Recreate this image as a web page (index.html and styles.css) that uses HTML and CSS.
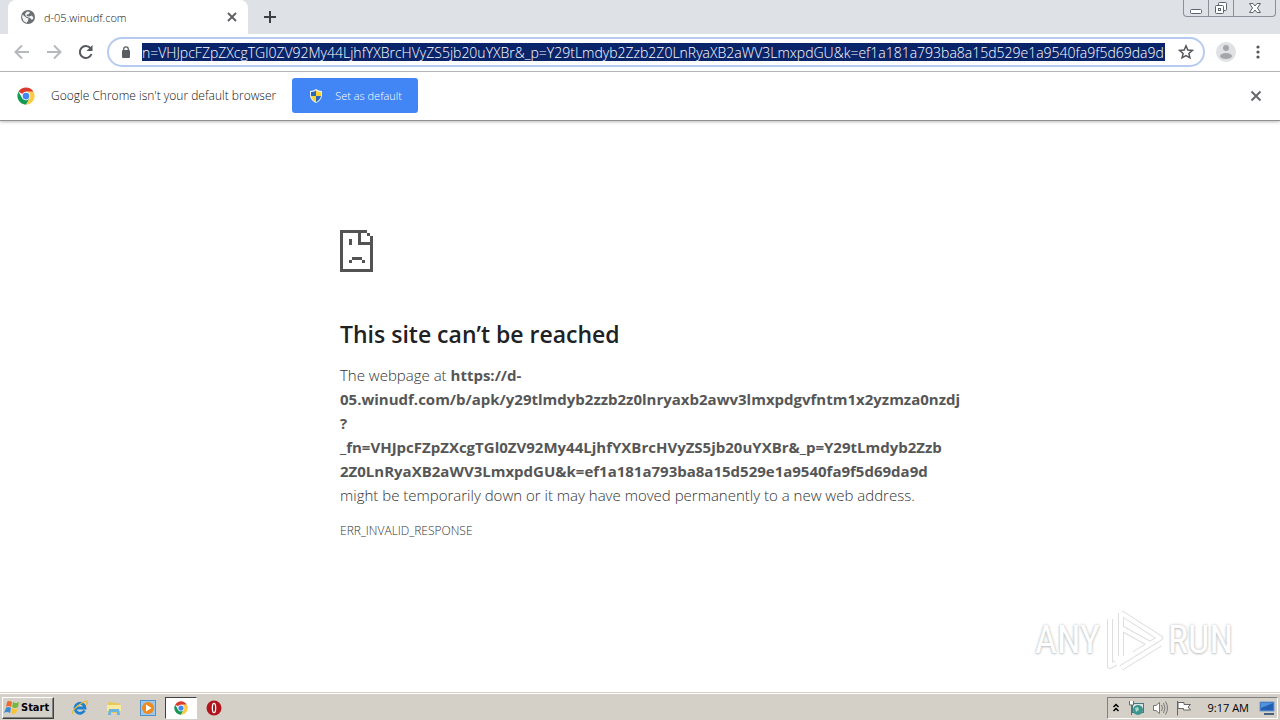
FILE: index.html
```html
<!DOCTYPE html>
<html lang="en">
<head>
  <meta charset="UTF-8" />
  <meta name="viewport" content="width=device-width, initial-scale=1.0" />
  <title>d-05.winudf.com</title>
  <link rel="stylesheet" href="styles.css">
</head>
<body>

<!-- Chrome logo, used in the infobar and the taskbar -->
<svg class="defs" width="0" height="0" aria-hidden="true">
  <symbol id="chrome" viewBox="0 0 48 48">
    <circle cx="24" cy="24" r="23" fill="#fff"/>
    <path d="M24 24 4.100 12.500A23 23 0 0 1 43.900 12.500H24Z" fill="#db3a2f"/>
    <path d="M4.100 12.500A23 23 0 0 0 24 47L34 29.750 24 35.500 14 29.750Z" fill="#159a55"/>
    <path d="M43.900 12.500A23 23 0 0 1 24 47L34 29.750 34 18 24 12.500Z" fill="#fbcb43"/>
    <circle cx="24" cy="24" r="11.500" fill="#fff"/>
    <circle cx="24" cy="24" r="9" fill="#4688f1"/>
  </symbol>
</svg>

<header class="tabstrip">
  <div class="tab">
    <svg class="globe" viewBox="0 0 16 16" width="16" height="16">
      <circle cx="8" cy="8" r="7" fill="#6b6e73"/>
      <path d="M2.500 5.500 6 8.500 8.500 9.500 8 12 6.500 14 3.500 12 2 8ZM7 2.500 10 3 9 5 7 5.500 6.500 7 9 7.500 12 6.500 13.500 9 12 11 10 9 6 7.500 5 5Z" fill="#f2f3f4"/>
    </svg>
    <span class="tab-title">d-05.winudf.com</span>
    <button class="icon-btn" aria-label="Close tab">
      <svg viewBox="0 0 10 10" width="10" height="10"><path d="M1 1 9 9M9 1 1 9" stroke="#5a5d61" stroke-width="1.800"/></svg>
    </button>
  </div>
  <button class="icon-btn new-tab" aria-label="New tab">
    <svg viewBox="0 0 12 12" width="12" height="12"><path d="M6 0V12M0 6H12" stroke="#3c4043" stroke-width="2"/></svg>
  </button>
  <div class="window-buttons">
    <button aria-label="Minimize">
      <svg viewBox="0 0 14 14" width="14" height="14"><rect x="1.500" y="8.500" width="11" height="4" rx="1" fill="#fff" stroke="#5c6270"/></svg>
    </button>
    <button aria-label="Restore">
      <svg viewBox="0 0 14 14" width="14" height="14" fill="#fff" stroke="#5c6270"><rect x="4.500" y="1.500" width="8" height="8" rx="1"/><rect x="1.500" y="4.500" width="8" height="8" rx="1"/><rect x="4.500" y="7.500" width="2" height="2"/></svg>
    </button>
    <button class="close-window" aria-label="Close">
      <svg viewBox="0 0 14 14" width="14" height="14"><path d="M1.500 2.500H5L7 5 9 2.500H12.500L9.500 7 12.500 11.500H9L7 9 5 11.500H1.500L4.500 7Z" fill="#fff" stroke="#5c6270"/></svg>
    </button>
  </div>
</header>

<nav class="toolbar">
  <button class="icon-btn" aria-label="Back">
    <svg viewBox="0 0 16 16" width="16" height="16" fill="none" stroke="#b6b8bb" stroke-width="2"><path d="M15 8H2M8 1.500 1.500 8 8 14.500"/></svg>
  </button>
  <button class="icon-btn" aria-label="Forward">
    <svg viewBox="0 0 16 16" width="16" height="16" fill="none" stroke="#b6b8bb" stroke-width="2"><path d="M1 8H14M8 1.500 14.500 8 8 14.500"/></svg>
  </button>
  <button class="icon-btn" aria-label="Reload">
    <svg viewBox="0 0 16 16" width="16" height="16"><path d="M13.500 10A6 6 0 1 1 12.500 4.200" fill="none" stroke="#55585c" stroke-width="2"/><path d="M14.500 1V7H8.500Z" fill="#55585c"/></svg>
  </button>
  <div class="omnibox">
    <svg class="lock" viewBox="0 0 10 12" width="10" height="12"><rect x="1" y="4" width="8" height="8" rx="1" fill="#5a5d61"/><path d="M2.700 5V3.200a2.300 2.300 0 0 1 4.600 0V5" fill="none" stroke="#5a5d61" stroke-width="1.300"/></svg>
    <input class="url" type="text" aria-label="Address" value="n=VHJpcFZpZXcgTGl0ZV92My44LjhfYXBrcHVyZS5jb20uYXBr&amp;_p=Y29tLmdyb2Zzb2Z0LnRyaXB2aWV3LmxpdGU&amp;k=ef1a181a793ba8a15d529e1a9540fa9f5d69da9d" />
    <button class="icon-btn" aria-label="Bookmark this page">
      <svg viewBox="0 0 16 16" width="16" height="16"><path d="M8 1.800 9.800 6 14.300 6.400 10.900 9.400 11.900 13.800 8 11.500 4.100 13.800 5.100 9.400 1.700 6.400 6.200 6Z" fill="none" stroke="#55585c" stroke-width="1.500"/></svg>
    </button>
  </div>
  <button class="icon-btn profile" aria-label="Profile">
    <svg viewBox="0 0 20 20" width="20" height="20"><circle cx="10" cy="10" r="10" fill="#e0e1e3"/><circle cx="10" cy="6" r="3" fill="#a4a6a9"/><ellipse cx="10" cy="14" rx="6" ry="3" fill="#a4a6a9"/></svg>
  </button>
  <button class="icon-btn" aria-label="Menu">
    <svg viewBox="0 0 16 16" width="16" height="16" fill="#55585c"><circle cx="8" cy="3" r="1.600"/><circle cx="8" cy="8" r="1.600"/><circle cx="8" cy="13" r="1.600"/></svg>
  </button>
</nav>

<div class="infobar">
  <svg width="18" height="18"><use href="#chrome"/></svg>
  <span class="info-text">Google Chrome isn't your default browser</span>
  <button class="set-default">
    <svg viewBox="0 0 16 16" width="16" height="16"><path d="M8 1Q11 3 14 3V8Q13 13 8 15Q3 13 2 8V3Q5 3 8 1Z" fill="#e8edf4"/><path d="M8 2.500V8H3V4Q6 4 8 2.500ZM8 8H13Q12 12 8 14Z" fill="#2b69b8"/><path d="M8 2.500Q10 4 13 4V8H8ZM3 8H8V14Q4 12 3 8Z" fill="#fbd334"/></svg>
    Set as default
  </button>
  <button class="icon-btn dismiss" aria-label="Dismiss">
    <svg viewBox="0 0 12 12" width="12" height="12"><path d="M1.500 1.500 10.500 10.500M10.500 1.500 1.500 10.500" stroke="#66696d" stroke-width="2"/></svg>
  </button>
</div>

<main class="page">
  <div class="error">
    <svg class="sad-page" viewBox="0 0 33 42" width="33" height="42" shape-rendering="crispEdges" fill="#535353">
      <path d="M0 0H27V3H3V39H30V15H18V3H21V12H30V6H33V42H0Z"/>
      <path d="M27 3H30V6H27ZM9 9H12V15H9ZM9 30H12V33H9ZM12 27H22V30H12ZM22 30H25V33H22Z"/>
    </svg>
    <h1>This site can’t be reached</h1>
    <p>The webpage at <strong>https://d-<br>05.winudf.com/b/apk/y29tlmdyb2zzb2z0lnryaxb2awv3lmxpdgvfntm1x2yzmza0nzdj<br>?<br>_fn=VHJpcFZpZXcgTGl0ZV92My44LjhfYXBrcHVyZS5jb20uYXBr&amp;_p=Y29tLmdyb2Zzb<br>2Z0LnRyaXB2aWV3LmxpdGU&amp;k=ef1a181a793ba8a15d529e1a9540fa9f5d69da9d</strong><br>might be temporarily down or it may have moved permanently to a new web address.</p>
    <div class="error-code">ERR_INVALID_RESPONSE</div>
  </div>

  <div class="watermark">
    <span>ANY</span>
    <svg viewBox="0 0 60 64" width="60" height="64" fill="none" stroke-linejoin="round">
      <g stroke="#dedede" stroke-width="6"><path d="M17 5V48M17 5 56 30 30 46M17 20 46 36M6 11V58L12 55M17 60 56 36"/></g>
      <g stroke="#fff" stroke-width="4"><path d="M17 5V48M17 5 56 30 30 46M17 20 46 36M6 11V58L12 55M17 60 56 36"/></g>
    </svg>
    <span>RUN</span>
  </div>
</main>

<footer class="taskbar">
  <button class="start">
    <svg viewBox="0 0 16 16" width="16" height="16"><path d="M3 2Q5 0 8 2L7 7Q4 5 2 7Z" fill="#ee6b30"/><path d="M9 2Q12 4 15 2L14 7Q11 9 8 7Z" fill="#78b83c"/><path d="M2 8Q4 6 7 8L6 13Q3 11 0 13Z" fill="#3d8ad0"/><path d="M8 8Q11 10 14 8L12 13Q10 15 7 13Z" fill="#f8c53a"/></svg>
    Start
  </button>
  <div class="quick-launch">
    <button aria-label="Internet Explorer">
      <svg viewBox="0 0 16 16" width="16" height="16" fill="none"><path d="M12.500 10.500A5 5 0 1 1 13 8H4" stroke="#1e80cf" stroke-width="2.800"/><path d="M1 14Q-1 11 7 5T15 2Q16 3 14 5" stroke="#e9b93a" stroke-width="1.300"/></svg>
    </button>
    <button aria-label="Windows Explorer">
      <svg viewBox="0 0 16 16" width="16" height="16"><path d="M2 2H7L8 3H14V13H2Z" fill="#e8c960"/><path d="M1 5H15V11H1Z" fill="#faeaa0"/><path d="M3 9H13L14 15H11V12H5V15H2Z" fill="#68b5df"/></svg>
    </button>
    <button aria-label="Windows Media Player">
      <svg viewBox="0 0 16 16" width="16" height="16"><rect x="0.500" y="0.500" width="15" height="15" fill="#9ac9ef" stroke="#4f91c8"/><circle cx="8" cy="8" r="6" fill="#f18a1d"/><path d="M6 4.500 11.500 8 6 11.500Z" fill="#fff"/></svg>
    </button>
    <button class="running" aria-label="Google Chrome">
      <svg width="14" height="14"><use href="#chrome"/></svg>
    </button>
    <button aria-label="Opera">
      <svg viewBox="0 0 16 16" width="16" height="16"><circle cx="8" cy="8" r="7.500" fill="#b3141b"/><ellipse cx="8" cy="8" rx="2.300" ry="5.300" fill="#fff"/><ellipse cx="8" cy="8" rx="1" ry="4" fill="#9c1218"/></svg>
    </button>
  </div>
  <div class="tray">
    <svg viewBox="0 0 8 12" width="8" height="12" fill="none" stroke="#000" stroke-width="1.500"><path d="M1.500 5 4 2.500 6.500 5M1.500 9 4 6.500 6.500 9"/></svg>
    <svg viewBox="0 0 16 16" width="16" height="16"><rect x="4.500" y="3.500" width="11" height="9" fill="#d9e4e2" stroke="#497781"/><circle cx="10" cy="10" r="5" fill="#3c9490"/><path d="M7 8 10 7 11 10 8 12Z" fill="#a9d9c5"/><path d="M1.500 1V5H5.500V1M3.500 5V15" fill="#fff" stroke="#6b6b68"/></svg>
    <svg viewBox="0 0 16 16" width="16" height="16" fill="none" stroke="#777775"><path d="M1.500 5.500H4L7.500 2.500V13.500L4 10.500H1.500Z" fill="#fff"/><path d="M9.500 5Q11.500 8 9.500 11M11.500 3Q14.500 8 11.500 13M13.500 1.500Q17.500 8 13.500 14.500"/></svg>
    <svg viewBox="0 0 16 16" width="16" height="16" fill="#fff" stroke="#656563"><path d="M1.500 1V15.500M2 2.500H8V4.500H14.500L12 7 14.500 10H7.500V8.500H2Z"/></svg>
    <time>9:17 AM</time>
    <svg viewBox="0 0 16 16" width="16" height="16"><rect x="1" y="2" width="14" height="9" fill="#2360b4" stroke="#6c98ce"/><path d="M2 3H14L2 8Z" fill="#4e93df"/><path d="M5 13H15V15H5Z" fill="#45617e"/></svg>
  </div>
</footer>

</body>
</html>
```
FILE: styles.css
```css
* {
  box-sizing: border-box;
}
body {
  margin: 0;
  height: 100vh;
  display: flex;
  flex-direction: column;
  overflow: hidden;
  background: #fff;
  font-family: "Open Sans", "Noto Sans", sans-serif;
  font-weight: 300;
  color: #111;
}

svg {
  display: block;
  flex: none;
}

.defs {
  position: absolute;
}

button {
  font: inherit;
  padding: 0;
  border: 0;
  background: none;
}

.icon-btn {
  display: flex;
  align-items: center;
  justify-content: center;
}

/* Tabs */
.tabstrip {
  display: flex;
  align-items: flex-start;
  height: 34px;
  padding-left: 8px;
  background: #dee1e6;
}

.tab {
  display: flex;
  align-items: center;
  gap: 8px;
  width: 240px;
  height: 34px;
  padding: 0 11px 0 12px;
  border-radius: 8px 8px 0 0;
  background: #fff;
  font-size: 11px;
}

.tab-title {
  flex: 1;
}

.new-tab {
  width: 44px;
  height: 34px;
}

.window-buttons {
  display: flex;
  margin: 0 4px 0 auto;
  height: 17px;
  border: 1px solid #8a8f99;
  border-top: 0;
  border-radius: 0 0 4px 4px;
}

.window-buttons button {
  display: flex;
  align-items: center;
  justify-content: center;
  width: 25px;
  border-right: 1px solid #8a8f99;
}

.window-buttons .close-window {
  width: 41px;
  border-right: 0;
}

/* Address bar */
.toolbar {
  display: flex;
  align-items: center;
  gap: 16px;
  height: 38px;
  padding: 0 14px 1px;
  border-bottom: 1px solid #b3b4b7;
}

.omnibox {
  flex: 1;
  display: flex;
  align-items: center;
  height: 30px;
  margin-left: -3px;
  padding: 0 9px 0 12px;
  border: 2px solid #b6cbef;
  border-radius: 15px;
}

.url {
  flex: 1;
  min-width: 0;
  height: 18px;
  margin: 0 13px 0 11px;
  padding: 0;
  border: 0;
  outline: 0;
  background: #0a246a;
  color: #fff;
  font-family: inherit;
  font-size: 14px;
  font-weight: 300;
}

.profile {
  margin-left: -5px;
  margin-right: -2px;
}

/* Default browser prompt */
.infobar {
  display: flex;
  align-items: center;
  height: 49px;
  padding: 0 18px 1px 17px;
  border-bottom: 1px solid #909090;
  box-shadow: 0 1px 3px #bbb;
  font-size: 12px;
}

.info-text {
  margin: 0 16px;
}

.set-default {
  display: flex;
  align-items: center;
  gap: 11px;
  height: 35px;
  padding: 0 16px;
  border-radius: 3px;
  background: #4285f4;
  color: #fff;
  font-size: 11px;
}

.dismiss {
  margin-left: auto;
}

/* Error page */
.page {
  flex: 1;
  position: relative;
}

.error {
  max-width: 600px;
  margin: 0 auto;
  padding-top: 109px;
  color: #333;
}

.error h1 {
  margin: 45px 0 12px;
  color: #202124;
  font-size: 23px;
  font-weight: 600;
  line-height: 34px;
}

.error p {
  margin: 0;
  font-size: 15px;
  line-height: 24px;
  white-space: nowrap;
}

.error strong {
  color: #565656;
  font-weight: 700;
}

.error-code {
  margin-top: 12px;
  font-size: 12px;
  line-height: 24px;
}

.watermark {
  position: absolute;
  right: 47px;
  bottom: 20px;
  display: flex;
  align-items: center;
  gap: 4px;
  color: #fff;
  font-family: "Roboto Condensed", "Open Sans Condensed", "Liberation Sans", sans-serif;
  font-size: 38px;
  font-weight: 400;
  text-shadow: 0 0 3px #bbb, 0 1px 2px #ccc;
}

/* Taskbar */
.taskbar {
  display: flex;
  align-items: center;
  height: 28px;
  padding: 2px 0 0 2px;
  border-top: 1px solid #d4d0c8;
  box-shadow: inset 0 1px #fff;
  background: #d4d0c8;
  color: #000;
  font-size: 11px;
  font-weight: 400;
}

.start {
  display: flex;
  align-items: center;
  gap: 1px;
  height: 22px;
  padding: 0 4px 0 1px;
  border: 1px solid;
  border-color: #fff #404040 #404040 #fff;
  box-shadow: inset -1px -1px #808080;
  font-family: "DejaVu Sans Condensed", "DejaVu Sans", sans-serif;
  font-weight: bold;
}

.quick-launch {
  display: flex;
  align-items: center;
  margin-left: 9px;
}

.quick-launch button {
  display: flex;
  align-items: center;
  justify-content: center;
  width: 34px;
  height: 22px;
}

.quick-launch .running {
  width: 32px;
  border: 1px solid;
  border-color: #404040 #fff #fff #404040;
  background: #fff;
}

.tray {
  display: flex;
  align-items: center;
  gap: 8px;
  height: 22px;
  margin: 0 2px 0 auto;
  padding: 0 2px 0 4px;
  border: 1px solid;
  border-color: #808080 #fff #fff #808080;
}

.tray time {
  margin: 0 2px 0 8px;
}
```
